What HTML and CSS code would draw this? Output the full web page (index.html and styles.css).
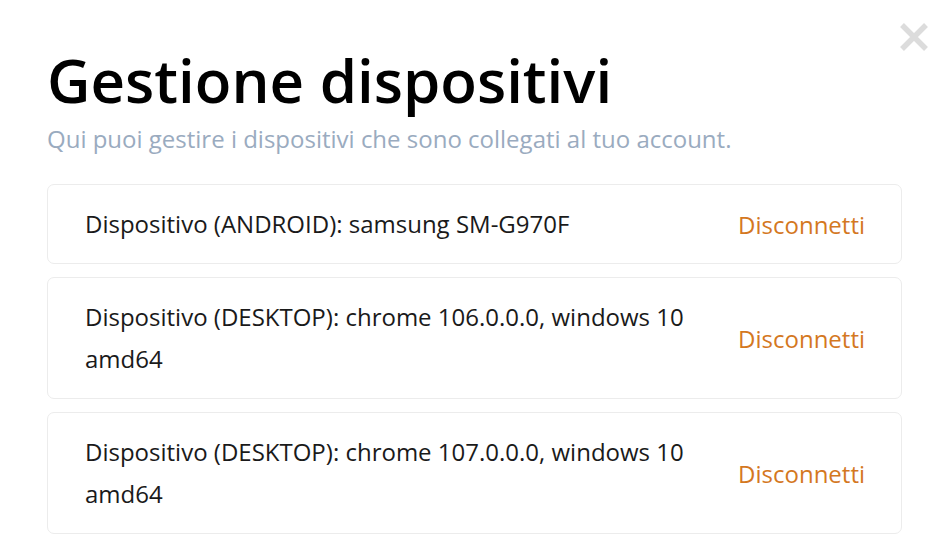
FILE: index.html
```html
<!DOCTYPE html>
<html lang="it">
<head>
  <meta charset="UTF-8">
  <meta name="viewport" content="width=device-width, initial-scale=1.0">
  <title>Gestione dispositivi</title>
  <link rel="stylesheet" href="styles.css">
</head>
<body>
  <div class="modal">
    <button class="close" type="button" aria-label="Chiudi">
      <svg width="30" height="30" viewBox="0 0 30 30"><path d="M3 3 L27 27 M27 3 L3 27" stroke="#dcdcdc" stroke-width="5.5"/></svg>
    </button>
    <h1>Gestione dispositivi</h1>
    <p class="subtitle">Qui puoi gestire i dispositivi che sono collegati al tuo account.</p>

    <ul class="devices">
      <li class="device">
        <span class="device-name">Dispositivo (ANDROID): samsung SM-G970F</span>
        <a href="#" class="disconnect">Disconnetti</a>
      </li>
      <li class="device">
        <span class="device-name">Dispositivo (DESKTOP): chrome 106.0.0.0, windows 10 amd64</span>
        <a href="#" class="disconnect">Disconnetti</a>
      </li>
      <li class="device">
        <span class="device-name">Dispositivo (DESKTOP): chrome 107.0.0.0, windows 10 amd64</span>
        <a href="#" class="disconnect">Disconnetti</a>
      </li>
    </ul>
  </div>
</body>
</html>
```

FILE: styles.css
```css
body {
  font-family: "Open Sans", sans-serif;
  background-color: #fff;
  margin: 0;
  padding: 0;
}

.modal {
  position: relative;
  padding: 38px 47px 20px 47px;
}

.close {
  position: absolute;
  top: 22px;
  right: 20px;
  background: none;
  border: none;
  padding: 0;
  cursor: pointer;
}

h1 {
  font-size: 60px;
  font-weight: 600;
  color: #000;
  margin: 0;
  line-height: 84px;
}

.subtitle {
  font-size: 24px;
  color: #9aabbf;
  margin: 0 0 28px 0;
  line-height: 34px;
}

.devices {
  list-style: none;
  margin: 0;
  padding: 0;
  display: flex;
  flex-direction: column;
  gap: 13px;
}

.device {
  display: flex;
  align-items: center;
  justify-content: space-between;
  border: 1px solid #ececec;
  border-radius: 7px;
  padding: 18px 36px 18px 37px;
}

.device-name {
  font-size: 24px;
  line-height: 42px;
  color: #1a1a1a;
  max-width: 620px;
}

.disconnect {
  font-size: 24px;
  color: #d4781f;
  text-decoration: none;
}
```
